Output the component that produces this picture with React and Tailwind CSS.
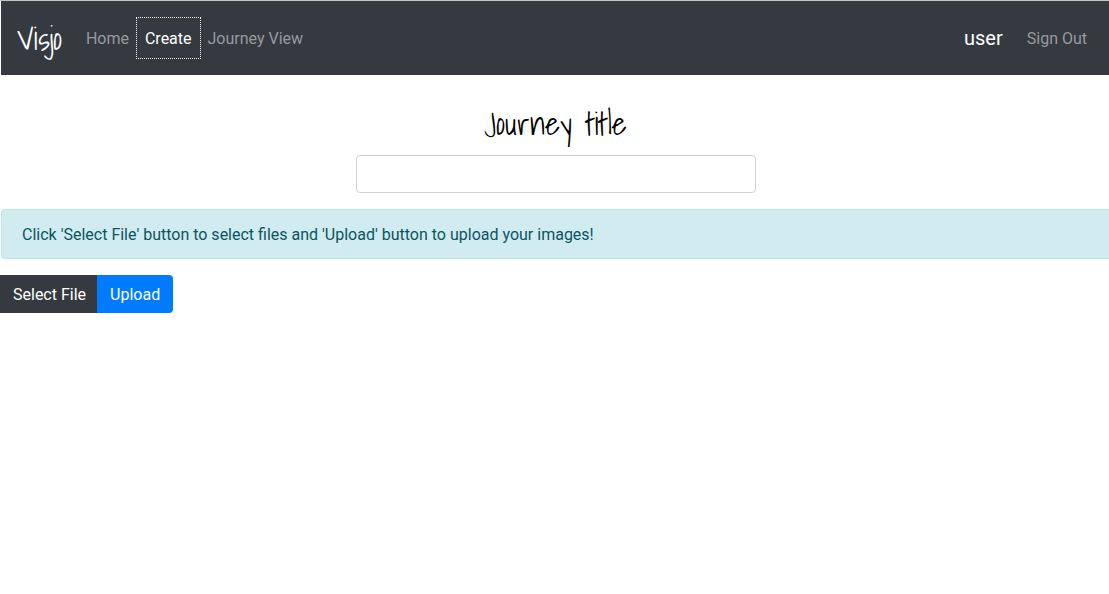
const navLink = "block px-2 pt-[9px] pb-[7px] text-base leading-6 text-[#979a9d] hover:text-white";

function Navbar() {
  return (
    <nav className="flex items-center bg-[#343a40] py-2 pr-[14px] pl-4">
      <a
        href="#"
        className="mr-4 text-[32px] leading-[58px] text-white [font-family:'Shadows_Into_Light','Roboto',cursive]"
      >
        Visjo
      </a>
      <ul className="flex flex-1 items-center">
        <li>
          <a href="#home" className={navLink}>Home</a>
        </li>
        <li>
          <a
            href="#create"
            aria-current="page"
            className="block px-2 pt-[9px] pb-[7px] text-base leading-6 text-white outline-1 outline-dotted outline-white"
          >
            Create
          </a>
        </li>
        <li>
          <a href="#journeys" className={navLink}>Journey View</a>
        </li>
      </ul>
      <a href="#user" className="mr-4 text-xl leading-[30px] text-white">user</a>
      <a href="#signout" className={navLink}>Sign Out</a>
    </nav>
  );
}

export default function App() {
  return (
    <div className="min-h-screen overflow-x-hidden border-t border-[#c5c6c0] bg-white text-base text-[#212529] [font-family:Roboto,sans-serif]">
      <div className="pl-px">
        <Navbar />
      </div>
      <main>
        <div className="pl-0.5">
          <form className="mx-auto flex w-full max-w-[400px] flex-col items-center pt-6">
            <label
              htmlFor="title"
              className="mb-2 text-[32px] leading-[48px] text-black [font-family:'Shadows_Into_Light','Roboto',cursive]"
            >
              Journey title
            </label>
            <input
              id="title"
              type="text"
              className="h-[38px] w-full rounded border border-[#ced4da] bg-white px-3 outline-none"
            />
          </form>
        </div>
        <div className="pl-px">
          <div
            role="alert"
            className="my-4 rounded-l border border-r-0 border-[#bee5eb] bg-[#d1ecf1] px-5 pt-[13px] pb-[11px] leading-6 text-[#0c5460]"
          >
            Click 'Select File' button to select files and 'Upload' button to upload your images!
          </div>
        </div>
        <div className="flex">
          <button type="button" className="bg-[#343a40] pt-2 pr-[11px] pb-1.5 pl-[13px] leading-6 text-white">
            Select File
          </button>
          <button type="button" className="rounded-r bg-[#007bff] px-[13px] pt-2 pb-1.5 leading-6 text-white">
            Upload
          </button>
        </div>
      </main>
    </div>
  );
}
